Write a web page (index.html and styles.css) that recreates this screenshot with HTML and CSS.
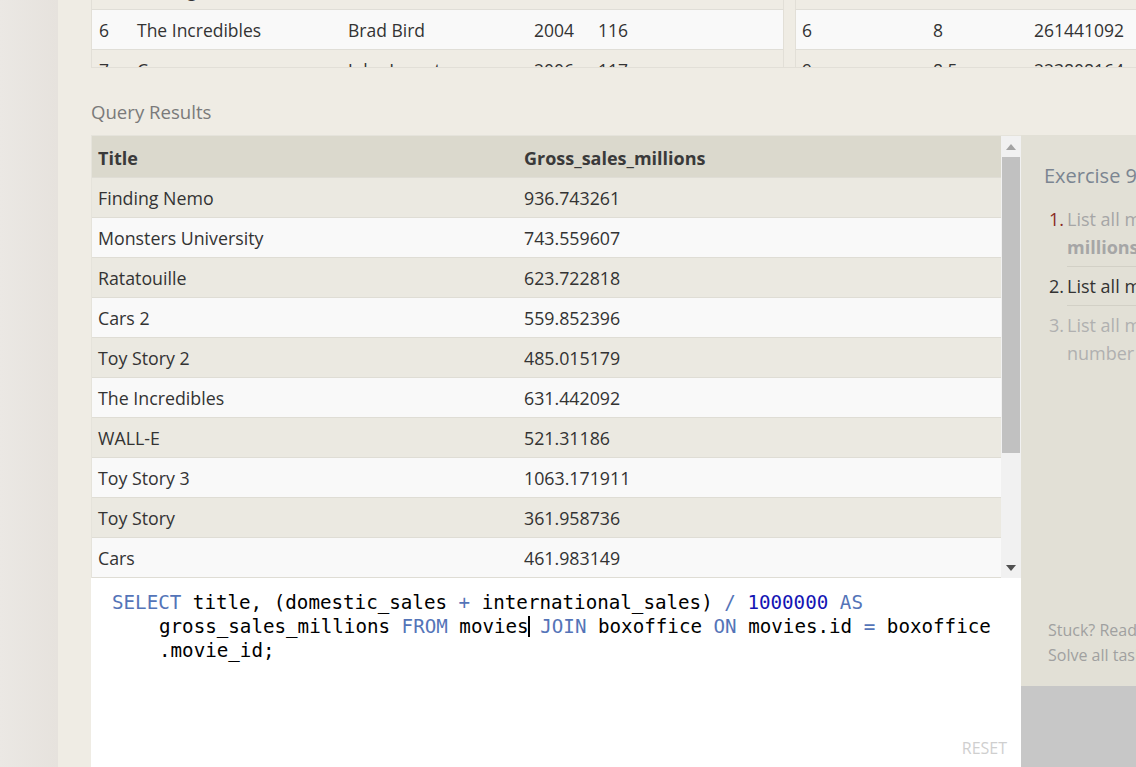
FILE: index.html
```html
<!DOCTYPE html>
<html>
<head>
<meta charset="utf-8">
<link rel="stylesheet" href="styles.css">
</head>
<body>
<div class="page">
  <div class="side"></div>
  <div class="main">
    <div class="top-tables">
      <div class="tbl tbl-movies">
        <div class="tbl-inner">
          <div class="trow odd"><span class="m1">5</span><span class="m2">Finding Nemo</span><span class="m3">Andrew Stanton</span><span class="m4">2003</span><span class="m5">107</span></div>
          <div class="trow even"><span class="m1">6</span><span class="m2">The Incredibles</span><span class="m3">Brad Bird</span><span class="m4">2004</span><span class="m5">116</span></div>
          <div class="trow odd"><span class="m1">7</span><span class="m2">Cars</span><span class="m3">John Lasseter</span><span class="m4">2006</span><span class="m5">117</span></div>
        </div>
      </div>
      <div class="tbl tbl-box">
        <div class="tbl-inner">
          <div class="trow odd"><span class="b1">3</span><span class="b2">7.9</span><span class="b3">245852179</span></div>
          <div class="trow even"><span class="b1">6</span><span class="b2">8</span><span class="b3">261441092</span></div>
          <div class="trow odd"><span class="b1">9</span><span class="b2">8.5</span><span class="b3">223808164</span></div>
        </div>
      </div>
    </div>

    <h2 class="section-title">Query Results</h2>

    <div class="workspace">
      <div class="work-left">
        <div class="results">
          <div class="results-body">
            <div class="rrow head"><span class="r1">Title</span><span class="r2">Gross_sales_millions</span></div>
            <div class="rrow odd"><span class="r1">Finding Nemo</span><span class="r2">936.743261</span></div>
            <div class="rrow even"><span class="r1">Monsters University</span><span class="r2">743.559607</span></div>
            <div class="rrow odd"><span class="r1">Ratatouille</span><span class="r2">623.722818</span></div>
            <div class="rrow even"><span class="r1">Cars 2</span><span class="r2">559.852396</span></div>
            <div class="rrow odd"><span class="r1">Toy Story 2</span><span class="r2">485.015179</span></div>
            <div class="rrow even"><span class="r1">The Incredibles</span><span class="r2">631.442092</span></div>
            <div class="rrow odd"><span class="r1">WALL-E</span><span class="r2">521.31186</span></div>
            <div class="rrow even"><span class="r1">Toy Story 3</span><span class="r2">1063.171911</span></div>
            <div class="rrow odd"><span class="r1">Toy Story</span><span class="r2">361.958736</span></div>
            <div class="rrow even"><span class="r1">Cars</span><span class="r2">461.983149</span></div>
            <div class="rrow odd"><span class="r1">Up</span><span class="r2">731.342744</span></div>
            <div class="rrow even"><span class="r1">Monsters, Inc.</span><span class="r2">562.816256</span></div>
          </div>
          <div class="scrollbar">
            <div class="sb-btn"><svg width="10" height="6" viewBox="0 0 10 6"><path d="M5 0 L10 6 L0 6 Z" fill="#a3a3a3"/></svg></div>
            <div class="sb-track"><div class="sb-thumb"></div></div>
            <div class="sb-btn"><svg width="10" height="6" viewBox="0 0 10 6"><path d="M0 0 L10 0 L5 6 Z" fill="#505050"/></svg></div>
          </div>
        </div>
        <div class="editor">
          <div class="code">
            <div class="line"><span class="kw">SELECT</span> title, (domestic_sales <span class="kw">+</span> international_sales) <span class="kw">/</span> <span class="num">1000000</span> <span class="kw">AS</span></div>
            <div class="line cont">gross_sales_millions <span class="kw">FROM</span> movies<span class="cursor"></span> <span class="kw">JOIN</span> boxoffice <span class="kw">ON</span> movies.id <span class="kw">=</span> boxoffice</div>
            <div class="line cont">.movie_id;</div>
          </div>
          <div class="reset">RESET</div>
        </div>
      </div>
      <div class="work-right">
        <div class="exercise">
          <h3 class="ex-title">Exercise 9</h3>
          <ol class="tasks">
            <li class="task done"><span class="tnum">1.</span><span class="ttxt">List all movies and their combined sales in<br><b>millions of dollars</b></span></li>
            <li class="task current"><span class="tnum">2.</span><span class="ttxt">List all movies and their ratings <b>in percent</b></span></li>
            <li class="task todo"><span class="tnum">3.</span><span class="ttxt">List all movies that were released on even<br>number years</span></li>
          </ol>
          <div class="ex-foot">
            <div>Stuck? Read this task's Solution.</div>
            <div>Solve all tasks to continue to the next lesson.</div>
          </div>
        </div>
        <div class="continue"></div>
      </div>
    </div>
  </div>
</div>
</body>
</html>
```

FILE: styles.css
```css
html, body {
  margin: 0;
  padding: 0;
  height: 100%;
  overflow: hidden;
}
body {
  font-family: "Open Sans", "Liberation Sans", sans-serif;
  color: #333;
  background: #efece4;
}
.page {
  display: flex;
  height: 767px;
  overflow: hidden;
}
.side {
  width: 58px;
  flex-shrink: 0;
  background: linear-gradient(to right, #ebe8e4, #e6e2dd);
}
.main {
  flex: 1;
  min-width: 0;
  background: #efece4;
  padding-left: 33px;
  overflow: hidden;
}

/* top clipped tables */
.top-tables {
  display: flex;
  gap: 11px;
  height: 67px;
  overflow: hidden;
  border-bottom: 1px solid #e2dfd7;
}
.tbl {
  border-left: 1px solid #e2dfd7;
  border-right: 1px solid #e2dfd7;
  flex-shrink: 0;
  overflow: hidden;
}
.tbl-movies { width: 691px; }
.tbl-box { width: 500px; }
.tbl-inner { margin-top: -30px; }
.trow {
  display: flex;
  align-items: center;
  height: 39px;
  border-bottom: 1px solid #e0ded7;
  font-size: 17.5px;
  white-space: nowrap;
}
.trow.odd { background: #efece4; }
.trow.even { background: #f9f9f9; }
.trow span { padding-left: 7px; box-sizing: border-box; }
.m1 { width: 38px; }
.m2 { width: 211px; }
.m3 { width: 186px; }
.m4 { width: 64px; }
.m5 { flex: 1; }
.b1 { width: 130px; padding-left: 6px !important; }
.b2 { width: 101px; }
.b3 { flex: 1; }

.section-title {
  margin: 31px 0 10px 0;
  font-size: 18.6px;
  line-height: 26px;
  font-weight: normal;
  color: #7a7a7a;
}

/* workspace */
.workspace {
  display: flex;
  height: 632px;
}
.work-left {
  width: 930px;
  flex-shrink: 0;
  display: flex;
  flex-direction: column;
}
.results {
  display: flex;
  flex-shrink: 0;
  height: 443px;
  box-sizing: border-box;
  border-top: 1px solid #e5e3db;
  overflow: hidden;
}
.results-body {
  flex: 1;
  border-left: 1px solid #e5e3db;
  overflow: hidden;
}
.rrow {
  display: flex;
  align-items: center;
  height: 39px;
  border-bottom: 1px solid #dfddd5;
  font-size: 17.8px;
  white-space: nowrap;
}
.rrow.head {
  height: 42px;
  background: #dbd9cd;
  font-weight: bold;
  font-size: 18px;
  color: #3a3a3a;
  padding-top: 2px;
  box-sizing: border-box;
}
.rrow.odd { background: #ebe9e1; }
.rrow.even { background: #f9f9f9; }
.rrow span { padding-left: 6px; box-sizing: border-box; }
.r1 { width: 426px; }
.r2 { flex: 1; }

.scrollbar {
  width: 20px;
  flex-shrink: 0;
  background: #f1f1f1;
  display: flex;
  flex-direction: column;
}
.sb-btn {
  height: 21px;
  display: flex;
  align-items: center;
  justify-content: center;
}
.sb-track {
  flex: 1;
  padding: 0 1px;
}
.sb-thumb {
  height: 296px;
  background: #c1c1c1;
}

.editor {
  flex: 1;
  background: #fff;
  display: flex;
  flex-direction: column;
  padding: 13px 14px 9px 21px;
}
.code {
  font-family: "DejaVu Sans Mono", "Liberation Mono", monospace;
  font-size: 19.2px;
  line-height: 24px;
  color: #000;
}
.line { white-space: pre; }
.line.cont { padding-left: 47px; }
.kw { color: #5474b8; }
.num { color: #1414b4; }
.cursor {
  display: inline-block;
  width: 0;
  height: 21px;
  border-left: 2px solid #000;
  vertical-align: -4px;
  margin-left: -1px;
  margin-right: -1px;
}
.reset {
  margin-top: auto;
  text-align: right;
  font-size: 16px;
  line-height: 20px;
  color: #cfcfcf;
}

/* right panel */
.work-right {
  flex: 1;
  min-width: 0;
  display: flex;
  flex-direction: column;
  overflow: hidden;
}
.exercise {
  height: 551px;
  flex-shrink: 0;
  box-sizing: border-box;
  background: #e2e0d6;
  padding: 27px 0 18px 23px;
  display: flex;
  flex-direction: column;
  white-space: nowrap;
}
.ex-title {
  margin: 0;
  font-size: 20px;
  line-height: 28px;
  font-weight: normal;
  color: #7b8591;
}
.tasks {
  list-style: none;
  margin: 10px 0 0 0;
  padding: 0;
  font-size: 18px;
  line-height: 28px;
}
.task {
  display: flex;
}
.tnum {
  width: 20px;
  text-align: right;
  margin-right: 3px;
  padding-top: 5px;
  flex-shrink: 0;
}
.ttxt {
  flex: 1;
  padding: 5px 0;
  border-bottom: 1px solid #d2d0c6;
}
.task:last-child .ttxt { border-bottom: none; }
.task.done .tnum { color: #8a2b24; }
.task.done .ttxt { color: #a6a6a6; }
.task.current { color: #333; }
.task.current b { font-weight: normal; }
.task.todo { color: #b0b0b0; }
.ex-foot {
  margin-top: auto;
  padding-left: 4px;
  font-size: 16px;
  line-height: 25px;
  color: #a0a0a0;
}
.continue {
  flex: 1;
  background: #c7c7c7;
}
```
